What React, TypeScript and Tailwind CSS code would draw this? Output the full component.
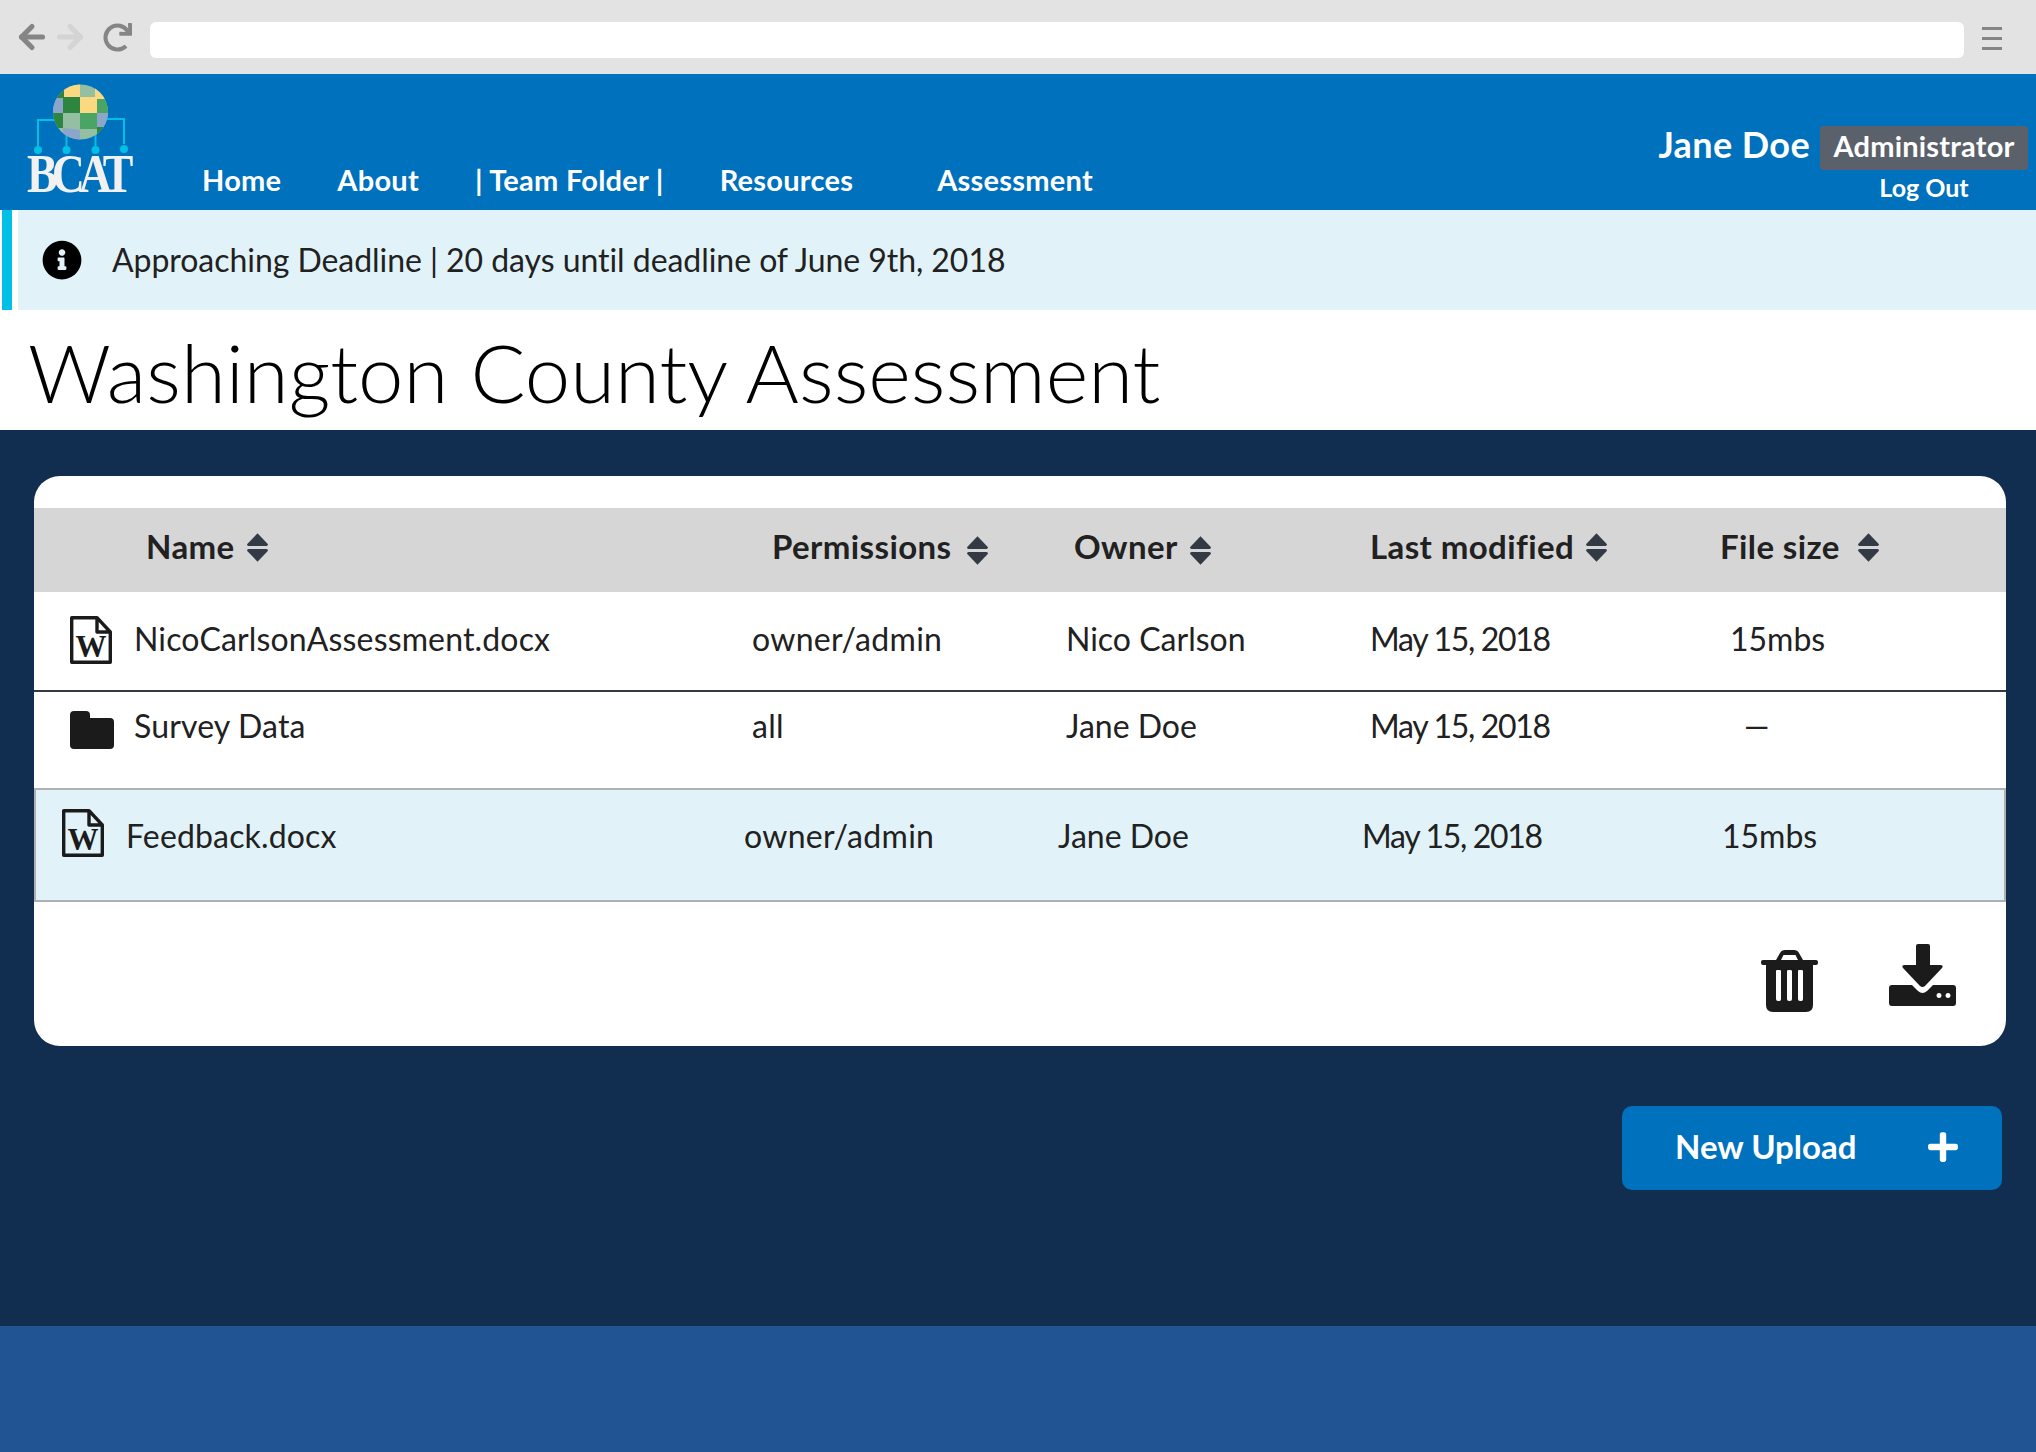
import { ArrowLeft, ArrowRight } from 'lucide-react'
import { FaInfoCircle, FaPlus, FaRedo } from 'react-icons/fa'

const headers = [
	{ label: 'Name', width: 'w-[626px]', iconClass: 'ml-[12px]' },
	{ label: 'Permissions', width: 'w-[302px]', iconClass: 'ml-[16px] mt-[6px]' },
	{ label: 'Owner', width: 'w-[296px]', iconClass: 'ml-[12px] mt-[6px]' },
	{ label: 'Last modified', width: 'w-[350px]', iconClass: 'ml-[12px]' },
	{ label: 'File size', width: 'w-[200px]', iconClass: 'ml-[18px]' },
]

function SortIcon({ className }: { className: string }) {
	return (
		<svg viewBox="0 0 20 27" className={`h-[29px] w-[21px] ${className}`} fill="#323a45">
			<path d="M10 0 L20 10.5 Q20 12 18.5 12 L1.5 12 Q0 12 0 10.5 Z" />
			<path d="M10 27 L20 16.5 Q20 15 18.5 15 L1.5 15 Q0 15 0 16.5 Z" />
		</svg>
	)
}

function WordIcon() {
	return (
		<svg viewBox="0 0 42 48" className="h-[48px] w-[42px] shrink-0">
			<path
				d="M1.7 1.7 H27 L40.3 16 V46.3 H1.7 Z M27 1.7 V16 H40.3"
				fill="none"
				stroke="#1b1b1b"
				strokeWidth="3.4"
				strokeLinejoin="round"
			/>
			<text x="21" y="41" textAnchor="middle" fontFamily="Liberation Serif" fontWeight="700" fontSize="31" fill="#1b1b1b">
				W
			</text>
		</svg>
	)
}

function FolderIcon() {
	return (
		<svg viewBox="0 0 44 38" className="-mr-[2px] mt-[5px] h-[38px] w-[44px] shrink-0" fill="#1b1b1b">
			<path d="M4 0 H16 Q20 0 20 4 V7 H40 Q44 7 44 11 V34 Q44 38 40 38 H4 Q0 38 0 34 V4 Q0 0 4 0 Z" />
		</svg>
	)
}

function TrashIcon() {
	return (
		<svg viewBox="0 0 57 62" className="h-[62px] w-[57px]">
			<path
				fillRule="evenodd"
				fill="#1b1b1b"
				d="M15 10 L19 3 Q20.5 0 24 0 H33 Q36.5 0 38 3 L42 10 H55 Q57 10 57 12 V13 Q57 15 55 15 H52 V55 Q52 62 45 62 H12 Q5 62 5 55 V15 H2 Q0 15 0 13 V12 Q0 10 2 10 Z M20 10 H37 L34.5 5 H22.5 Z M15 21 V49 Q15 51 17 51 H18.5 Q20 51 20 49 V21 Q20 20 18.5 20 H16 Q15 20 15 21 Z M26 21 V49 Q26 51 28 51 H29 Q31 51 31 49 V21 Q31 20 29 20 H28 Q26 20 26 21 Z M37 21 V49 Q37 51 39 51 H40.5 Q42 51 42 49 V21 Q42 20 40.5 20 H38 Q37 20 37 21 Z"
			/>
		</svg>
	)
}

function DownloadIcon() {
	return (
		<svg viewBox="0 0 67 62" className="h-[62px] w-[67px]">
			<path
				fill="#1b1b1b"
				d="M27 2 Q27 0 29 0 H39 Q41 0 41 2 V21 H51 Q55 21 53 24 L36 42 Q33.5 44 31 42 L14 24 Q12 21 16 21 H27 Z"
			/>
			<path
				fill="#1b1b1b"
				fillRule="evenodd"
				d="M3 41 H23 L29 47 Q33.5 51 38 47 L44 41 H64 Q67 41 67 44 V59 Q67 62 64 62 H3 Q0 62 0 59 V44 Q0 41 3 41 Z M50 49 a2.5 2.5 0 1 0 0.01 0 Z M59 49 a2.5 2.5 0 1 0 0.01 0 Z"
			/>
		</svg>
	)
}

function Logo() {
	return (
		<svg viewBox="0 0 110 110" className="h-[110px] w-[110px] shrink-0 overflow-visible">
			<defs>
				<clipPath id="globe">
					<circle cx="53.5" cy="28" r="27.5" />
				</clipPath>
			</defs>
			<path d="M28 36 H11 V62 M39.5 50 V62 M68.5 50 V62 M78 35 H97 V60" fill="none" stroke="#02bfe7" strokeWidth="2" />
			<circle cx="11" cy="66" r="4" fill="#02bfe7" />
			<circle cx="39.5" cy="66" r="4" fill="#02bfe7" />
			<circle cx="68.5" cy="66" r="4" fill="#02bfe7" />
			<circle cx="97" cy="65" r="4" fill="#02bfe7" />
			<g clipPath="url(#globe)">
				<rect x="26" y="0" width="56" height="56" fill="#94bfa2" />
				<path d="M26 0 H37 V14 H26 Z" fill="#2e8540" />
				<path d="M37 0 H53 V13 H37 Z" fill="#fad980" />
				<path d="M68 0 H82 V15 H68 Z" fill="#fad980" />
				<path d="M26 14 H36 V29 H26 Z" fill="#8ba6ca" />
				<path d="M36 13 H53 V29 H36 Z" fill="#2e8540" />
				<path d="M53 13 H70 V29 H53 Z" fill="#fad980" />
				<path d="M70 15 H82 V29 H70 Z" fill="#4aa564" />
				<path d="M26 29 H36 V44 H26 Z" fill="#2e8540" />
				<path d="M53 29 H70 V45 H53 Z" fill="#4aa564" />
				<path d="M70 29 H82 V41 L70 45 Z" fill="#8ba6ca" />
				<path d="M36 44 L53 46 V56 H36 Z" fill="#8ba6ca" />
				<path d="M70 43 H82 V56 H70 Z" fill="#2e8540" />
			</g>
			{/* letters overlap in the real logo, so squeeze them and tighten the spacing */}
			<text
				transform="translate(0 108) scale(0.85 1)"
				letterSpacing="-7"
				fontFamily="Liberation Serif"
				fontWeight="700"
				fontSize="54"
				fill="#f1f1f1"
			>
				BCAT
			</text>
		</svg>
	)
}

function BrowserBar() {
	return (
		<div className="flex h-[74px] items-center bg-[#e3e3e3] pl-[14px] pr-[34px]">
			<ArrowLeft className="h-[36px] w-[36px] text-[#858585]" strokeWidth={3.4} />
			<ArrowRight className="ml-[2px] h-[36px] w-[36px] text-[#d4d4d4]" strokeWidth={3.4} />
			<FaRedo className="ml-[15px] h-[29px] w-[29px] text-[#858585]" />
			<div className="ml-[18px] mt-[6px] h-[36px] flex-1 rounded-[6px] bg-white" />
			<div className="ml-[18px] mt-[2px] flex w-[20px] flex-col gap-[7px]">
				<div className="h-[3px] bg-[#858585]" />
				<div className="h-[3px] bg-[#858585]" />
				<div className="h-[3px] bg-[#858585]" />
			</div>
		</div>
	)
}

function NavBar() {
	return (
		<div className="flex h-[136px] bg-[#0071bc] pl-[27px] pr-[8px] text-white">
			<div className="pt-[10px]">
				<Logo />
			</div>
			<nav className="ml-[65px] flex gap-[56px] pt-[88px] text-[29px] leading-[36px] font-bold tracking-[0.25px]">
				<a>Home</a>
				<a>About</a>
				<a>| Team Folder |</a>
				<a className="mr-[28px]">Resources</a>
				<a>Assessment</a>
			</nav>
			<div className="ml-auto flex flex-col items-end pt-[52px]">
				<div className="flex items-center gap-[10px]">
					<span className="-mt-[9px] text-[36px] leading-[44px] font-bold tracking-[0.4px]">Jane Doe</span>
					<span className="flex h-[44px] w-[208px] items-center justify-center rounded-[4px] bg-[#5b616b] pb-[5px] text-[29px] font-bold tracking-[0.2px]">
						Administrator
					</span>
				</div>
				<a className="w-[208px] text-center text-[25px] leading-[34px] font-bold">Log Out</a>
			</div>
		</div>
	)
}

function FileRow({
	icon,
	name,
	perms,
	owner,
	date,
	size,
	className,
}: {
	icon: React.ReactNode
	name: string
	perms: string
	owner: string
	date: string
	size: React.ReactNode
	className: string
}) {
	return (
		<div className={`flex text-[32px] leading-[40px] text-[#212121] ${className}`}>
			<div className="flex w-[682px] gap-[22px]">
				{icon}
				<span className="tracking-[0.15px]">{name}</span>
			</div>
			<span className="w-[314px] tracking-[0.3px]">{perms}</span>
			<span className="w-[304px]">{owner}</span>
			<span className="w-[360px] tracking-[-1.3px]">{date}</span>
			<span>{size}</span>
		</div>
	)
}

export default function App() {
	return (
		<div className="flex min-h-[1452px] flex-col bg-white font-['Lato',sans-serif]">
			<BrowserBar />
			<NavBar />

			<div className="ml-[2px] flex h-[100px] items-center bg-[#e1f3f8]">
				<div className="h-full w-[10px] bg-[#02bfe7]" />
				<div className="h-full w-[6px] bg-white" />
				<FaInfoCircle className="ml-[24px] h-[40px] w-[40px] text-black" />
				<span className="ml-[30px] text-[32px] text-[#212121] tracking-[-0.05px]">
					Approaching Deadline | 20 days until deadline of June 9th, 2018
				</span>
			</div>

			<h1 className="flex h-[120px] items-center pl-[28px] pt-[4px] text-[81.5px] font-light text-black">
				Washington County Assessment
			</h1>

			<main className="flex flex-1 flex-col bg-[#112e51] pl-[34px] pr-[30px] pt-[46px]">
				<div className="h-[570px] rounded-[26px] bg-white pt-[32px]">
					<div className="flex h-[84px] items-center bg-[#d6d6d6] pb-[6px] pl-[112px] text-[33px] font-bold tracking-[0.4px] text-[#212121]">
						{headers.map((h) => (
							<div key={h.label} className={`flex items-center ${h.width}`}>
								<span>{h.label}</span>
								<SortIcon className={h.iconClass} />
							</div>
						))}
					</div>

					<FileRow
						icon={<div className="-mt-[3px]"><WordIcon /></div>}
						name="NicoCarlsonAssessment.docx"
						perms="owner/admin"
						owner="Nico Carlson"
						date="May 15, 2018"
						size="15mbs"
						className="h-[100px] border-b-2 border-[#323a45] pl-[36px] pt-[27px]"
					/>
					<FileRow
						icon={<FolderIcon />}
						name="Survey Data"
						perms="all"
						owner="Jane Doe"
						date="May 15, 2018"
						size={<span className="ml-[14px]">—</span>}
						className="h-[96px] pl-[36px] pt-[14px]"
					/>
					<FileRow
						icon={<div className="-mt-[7px]"><WordIcon /></div>}
						name="Feedback.docx"
						perms="owner/admin"
						owner="Jane Doe"
						date="May 15, 2018"
						size="15mbs"
						className="h-[114px] border-2 border-[#aeb0b5] bg-[#e1f3f8] pl-[26px] pt-[26px]"
					/>

					<div className="flex items-start justify-end pr-[50px] pt-[42px]">
						<div className="mt-[6px]">
							<TrashIcon />
						</div>
						<div className="ml-[71px]">
							<DownloadIcon />
						</div>
					</div>
				</div>

				<button className="mt-[60px] ml-auto mr-[4px] flex h-[84px] w-[380px] items-center justify-between rounded-[10px] bg-[#0071bc] pb-[2px] pl-[53px] pr-[42px] text-[33px] font-bold text-white">
					New Upload
					<FaPlus className="h-[34px] w-[34px]" />
				</button>
			</main>

			<footer className="h-[126px] bg-[#205493]" />
		</div>
	)
}
